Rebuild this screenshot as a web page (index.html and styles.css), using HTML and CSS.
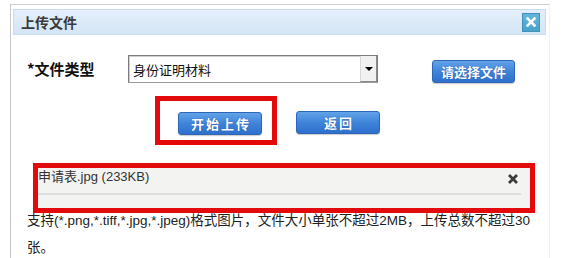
FILE: index.html
```html
<!DOCTYPE html>
<html lang="zh-CN">
<head>
<meta charset="utf-8">
<title>上传文件</title>
<link rel="stylesheet" href="styles.css">
</head>
<body>
<div class="frame">
  <div class="titlebar">
    <span class="title">上传文件</span>
    <span class="close"><svg width="10" height="10" viewBox="0 0 10 10"><path d="M1.5 1.5L8.5 8.5M8.5 1.5L1.5 8.5" stroke="#fff" stroke-width="2.6" stroke-linecap="square"/></svg></span>
  </div>
  <div class="content">
    <div class="row1">
      <span class="label">*文件类型</span>
      <div class="select">
        <span class="select-text">身份证明材料</span>
        <span class="select-btn"><span class="tri"></span></span>
      </div>
      <button class="btn btn-choose">请选择文件</button>
    </div>
    <div class="row2">
      <div class="redbox1"><button class="btn btn-spaced">开始上传</button></div>
      <button class="btn btn-spaced btn-back">返回</button>
    </div>
    <div class="redbox2">
      <div class="file-inner">
        <div class="file-row">
          <span class="file-name">申请表.jpg (233KB)</span>
          <span class="file-x"><svg width="12" height="12" viewBox="0 0 12 12"><path d="M2 2L10 10M10 2L2 10" stroke="#3c3c3c" stroke-width="2.8" stroke-linecap="butt"/></svg></span>
        </div>
        <div class="file-sep"></div>
      </div>
    </div>
    <p class="hint">支持(*.png,*.tiff,*.jpg,*.jpeg)格式图片，文件大小单张不超过2MB，上传总数不超过30张。</p>
  </div>
</div>
</body>
</html>
```
FILE: styles.css
```css
html, body {
  margin: 0;
  padding: 0;
  background: #fff;
}
body {
  font-family: "Liberation Sans", "Noto Sans CJK SC", sans-serif;
  color: #222;
  overflow: hidden;
}
.frame {
  box-sizing: border-box;
  margin: 4px 0 0 10px;
  width: 540px;
  height: 254px;
  border-top: 1px solid #cfcfcf;
  border-left: 1px solid #c8c8c8;
  border-right: 1px solid #f0f0f0;
  padding: 4px 2px 0 2px;
}
.titlebar {
  box-sizing: border-box;
  height: 26px;
  border: 1px solid #c9dcef;
  background: linear-gradient(#e4effa, #d4e5f6);
  display: flex;
  align-items: center;
  justify-content: space-between;
  padding-left: 7px;
  margin-right: 1px;
}
.title {
  font-family: "Noto Sans CJK SC", sans-serif;
  font-size: 14px;
  color: #3a3a3a;
  font-weight: 600;
}
.close {
  box-sizing: border-box;
  width: 18px;
  height: 19px;
  margin-right: 5px;
  background: linear-gradient(#62b6da, #4aa2c9);
  border: 1px solid #3e93bb;
  display: flex;
  align-items: center;
  justify-content: center;
}
.close svg {
  display: block;
}
.content {
  padding-left: 14px;
}
.row1 {
  margin-top: 20px;
  display: flex;
  align-items: flex-start;
  height: 28px;
}
.label {
  width: 101px;
  font-family: "Noto Sans CJK SC", sans-serif;
  font-weight: bold;
  font-size: 15px;
  line-height: 28px;
  color: #111;
}
.select {
  box-sizing: border-box;
  width: 250px;
  height: 28px;
  border: 1px solid #7d7d7d;
  border-bottom-color: #9a9a9a;
  box-shadow: inset 1px 1px 0 #cfcfcf;
  display: flex;
  align-items: stretch;
  background: #fff;
}
.select-text {
  flex: 1;
  padding-left: 4px;
  font-family: "Noto Sans CJK SC", sans-serif;
  font-size: 13px;
  line-height: 27px;
  color: #111;
}
.select-btn {
  box-sizing: border-box;
  width: 17px;
  background: #f1f1f1;
  border-left: 1px solid #d8d8d8;
  border-right: 1px solid #8a8a8a;
  border-bottom: 1px solid #8a8a8a;
  display: flex;
  align-items: center;
  justify-content: center;
}
.tri {
  width: 0;
  height: 0;
  border-left: 4px solid transparent;
  border-right: 4px solid transparent;
  border-top: 4px solid #000;
}
.btn {
  box-sizing: border-box;
  width: 84px;
  height: 23px;
  padding: 0;
  border: 1px solid #2d66b7;
  border-radius: 3px;
  background: linear-gradient(#62a3e8, #3f84d8 50%, #2e70cc);
  color: #fff;
  font-family: "Noto Sans CJK SC", sans-serif;
  font-weight: bold;
  font-size: 13px;
  line-height: 21px;
  text-shadow: 0 0 1px #1d4f9a;
  box-shadow: 0 1px 1px rgba(0,0,0,0.2);
}
.btn-choose {
  width: 83px;
  margin-left: 54px;
  margin-top: 5px;
}
.btn-spaced {
  letter-spacing: 2px;
  text-indent: 2px;
}
.row2 {
  margin-top: 13px;
  display: flex;
  align-items: flex-start;
}
.redbox1 {
  margin-left: 128px;
  border: 5px solid #e20a0a;
  padding: 11px 10px 5px 18px;
  display: flex;
}
.btn-back {
  margin-left: 19px;
  margin-top: 15px;
}
.redbox2 {
  box-sizing: border-box;
  margin-top: 18px;
  margin-left: 6px;
  width: 502px;
  height: 50px;
  border: 5px solid #e20a0a;
}
.file-inner {
  height: 40px;
  background: #f3f3f2;
  overflow: hidden;
}
.file-row {
  height: 18px;
  display: flex;
  align-items: center;
  justify-content: space-between;
  margin-bottom: 7px;
}
.file-name {
  margin-left: 0;
  font-size: 13px;
  color: #333;
  line-height: 18px;
}
.file-x {
  margin-right: 11px;
  margin-top: 4px;
  display: flex;
}
.file-sep {
  height: 2px;
  background: #dedede;
  margin-right: 9px;
}
.hint {
  margin: -6px 0 0 0;
  width: 512px;
  font-size: 13.5px;
  line-height: 27px;
  color: #222;
}
```
